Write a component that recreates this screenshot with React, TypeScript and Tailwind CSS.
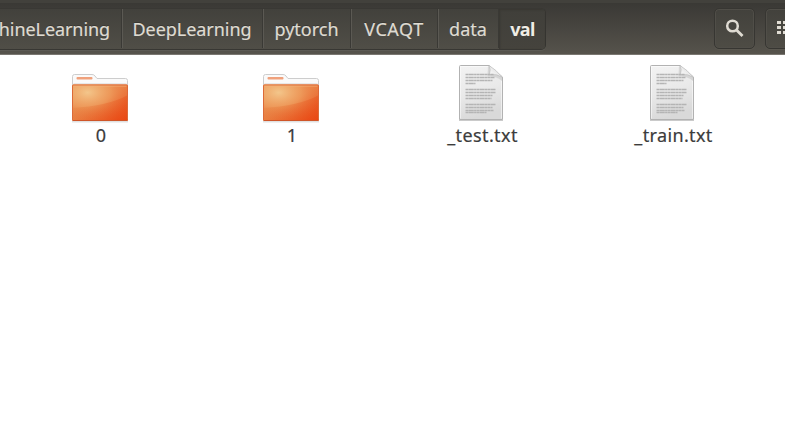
import React from "react";

function Crumb({ label, box, text }: { label: string; box: string; text: string }) {
  return (
    <div className={`flex h-full shrink-0 items-center justify-center border-r border-[#3a3935] ${box}`}>
      <span className={`whitespace-nowrap leading-6 ${text}`}>{label}</span>
    </div>
  );
}

function FolderIcon({ id }: { id: string }) {
  return (
    <svg width="60" height="52" viewBox="0 0 60 52" className="block">
      <defs>
        <linearGradient id={`${id}-base`} x1="0" y1="0" x2="1" y2="1">
          <stop offset="0" stopColor="#eda262" />
          <stop offset="0.5" stopColor="#ea8246" />
          <stop offset="1" stopColor="#ea4b16" />
        </linearGradient>
        <radialGradient id={`${id}-glow`} cx="0.28" cy="0.22" r="0.8">
          <stop offset="0" stopColor="#f3c68b" />
          <stop offset="0.5" stopColor="#efa363" stopOpacity="0.65" />
          <stop offset="1" stopColor="#ea6630" stopOpacity="0" />
        </radialGradient>
        <linearGradient id={`${id}-low`} x1="0" y1="0" x2="1" y2="0.3">
          <stop offset="0" stopColor="#e39048" stopOpacity="0.3" />
          <stop offset="1" stopColor="#e83a08" stopOpacity="0.3" />
        </linearGradient>
      </defs>
      <path d="M2 48h56v2.5H2z" fill="#999" opacity=".3" />
      <path d="M2.5 15V4.5Q2.5 2.5 4.5 2.5H22Q24 2.5 25 4L27 6.5H55.5Q57.5 6.5 57.5 8.5V15z" fill="#fafafa" stroke="#cdcdcd" />
      <rect x="6.5" y="5" width="16" height="2.6" rx="1" fill="#f0a17c" />
      <path d="M3.5 11.8h53" stroke="#dedede" />
      <rect x="2" y="12.5" width="56" height="36.5" rx="1.5" fill={`url(#${id}-base)`} />
      <rect x="2" y="12.5" width="56" height="36.5" rx="1.5" fill={`url(#${id}-glow)`} />
      <path d="M2 36Q38 34 58 23V47.5Q58 49 56.5 49H3.5Q2 49 2 47.5z" fill={`url(#${id}-low)`} />
      <rect x="2.5" y="13" width="55" height="35.5" rx="1" fill="none" stroke="#dc6a38" />
      <path d="M3.5 14.2h53" stroke="#f2b27a" opacity=".6" />
      <path d="M3 48.5h54" stroke="#cf5528" />
    </svg>
  );
}

const lines = [
  [10.5, 28], [13.5, 29], [16.5, 27], [19.5, 10],
  [25.5, 30], [28.5, 30], [31.5, 27], [34.5, 26],
  [40.5, 30], [43.5, 27], [46.5, 28], [48.5, 21],
];

function DocumentIcon({ id }: { id: string }) {
  return (
    <svg width="46" height="58" viewBox="0 0 46 58" className="block">
      <defs>
        <linearGradient id={`${id}-page`} x1="0" y1="0" x2=".25" y2="1">
          <stop offset="0" stopColor="#f3f3f3" />
          <stop offset=".55" stopColor="#e9e9e9" />
          <stop offset="1" stopColor="#d9d9d9" />
        </linearGradient>
        <linearGradient id={`${id}-fold`} x1="0" y1="1" x2="1" y2="0">
          <stop offset="0" stopColor="#fff" />
          <stop offset="1" stopColor="#d5d5d5" />
        </linearGradient>
      </defs>
      <path d="M1 56.2h44" stroke="#b3b3b3" />
      <path d="M2.5 1.5H31L44.5 13V55.5H1.5V2.5Q1.5 1.5 2.5 1.5z" fill={`url(#${id}-page)`} stroke="#b2b2b2" />
      <path d="M2.5 54.5V2.5H30M43.5 16V54.5" fill="none" stroke="#fff" opacity=".5" />
      <path d="M30 2L29.5 12.5Q37 11.5 44 17V13z" fill="#c9c9c9" opacity=".65" />
      <path d="M31 1.5Q33 5 31.5 10.5Q39 9.5 44.5 13.5Q38 5.5 31 1.5z" fill={`url(#${id}-fold)`} stroke="#bbb" strokeWidth=".6" />
      {lines.map(([y, w]) => (
        <path key={y} d={`M7.5 ${y}h${w}`} stroke="#b4b4b4" strokeWidth="1.3" strokeDasharray="3 .3 5 .3 2 .3" />
      ))}
    </svg>
  );
}

function Item({ icon, label, art, text }: { icon: React.ReactNode; label: string; art: string; text: string }) {
  return (
    <div className="flex w-[191px] shrink-0 flex-col items-center">
      <div className={`flex h-[60px] items-end justify-center ${art}`}>{icon}</div>
      <span className={`whitespace-nowrap text-[18px] leading-[23px] text-[#3c3c3c] [-webkit-text-stroke:0.2px_#3c3c3c] ${text}`}>{label}</span>
    </div>
  );
}

export default function App() {
  return (
    <div className="h-[441px] w-[785px] overflow-hidden bg-white font-['Noto_Sans','Open_Sans',sans-serif]">
      <header className="flex h-[55px] items-start overflow-hidden border-t-[3px] border-b border-t-[#42413c] border-b-[#7a7771] bg-linear-to-b from-[#3a3935] to-[#56534c] pt-[5px] text-[18px] text-[#dfdbd2] [text-shadow:0_-1px_0_#383732]">
        <nav className="flex h-[42px] w-[546px] shrink-0 overflow-hidden rounded-r-[5px] border-t border-r border-b border-t-[#393834] border-r-[#353430] border-b-[#383733] bg-linear-to-b from-[#42413c] to-[#504e47] pb-px shadow-[0_1px_0_#5c5a54]">
          <Crumb label="hineLearning" box="w-[122px] justify-end pr-[11px]" text="tracking-[-0.08px] [-webkit-text-stroke:0.2px_#dfdbd2]" />
          <Crumb label="DeepLearning" box="w-[141px] shadow-[inset_1px_0_0_#5b5953]" text="tracking-[-0.05px] [-webkit-text-stroke:0.2px_#dfdbd2]" />
          <Crumb label="pytorch" box="w-[88px] shadow-[inset_1px_0_0_#5b5953]" text="[-webkit-text-stroke:0.2px_#dfdbd2]" />
          <Crumb label="VCAQT" box="w-[87px] shadow-[inset_1px_0_0_#5b5953]" text="tracking-[0.6px] [-webkit-text-stroke:0.2px_#dfdbd2]" />
          <Crumb label="data" box="w-[61px] shadow-[inset_1px_0_0_#5b5953]" text="tracking-[0.05px] [-webkit-text-stroke:0.2px_#dfdbd2]" />
          <div className="-mb-px flex flex-1 items-center justify-center bg-linear-to-b from-[#403f3a] to-[#45433d] pb-px pl-px font-bold text-[#f0ede5] shadow-[inset_1px_1px_2px_#383732]">
            <span className="leading-6 tracking-[-0.6px]">val</span>
          </div>
        </nav>
        <button className="ml-[168px] flex h-[41px] w-[41px] shrink-0 items-center justify-center rounded-[5px] border border-[#373632] bg-linear-to-b from-[#42413c] to-[#4e4c45] shadow-[inset_0_0_0_1px_#504e48,0_1px_0_#5a574f]">
          <svg width="20" height="20" viewBox="0 0 20 20" fill="none" stroke="#dfdbd2">
            <circle cx="7.5" cy="7" r="5.3" strokeWidth="2.5" />
            <path d="M11.5 11L17.5 17" strokeWidth="2.8" />
          </svg>
        </button>
        <button className="ml-[10px] flex h-[41px] w-[41px] shrink-0 items-center rounded-[5px] border border-[#373632] bg-linear-to-b from-[#42413c] to-[#4e4c45] pb-px pl-[11px] shadow-[inset_0_0_0_1px_#504e48,0_1px_0_#5a574f]">
          <svg width="17" height="14" viewBox="0 0 17 14" fill="#dfdbd2">
            <path d="M0 0h4v3H0zM6 0h4v3H6zM12 0h4v3h-4zM0 5h4v3H0zM6 5h4v3H6zM12 5h4v3h-4zM0 10h4v3H0zM6 10h4v3H6zM12 10h4v3h-4z" />
          </svg>
        </button>
      </header>
      <main className="flex pt-[9px] pl-[5px]">
        <Item icon={<FolderIcon id="zero" />} label="0" art="pr-[2px]" text="pl-px" />
        <Item icon={<FolderIcon id="one" />} label="1" art="pr-[2px]" text="pl-px" />
        <Item icon={<DocumentIcon id="test" />} label="_test.txt" art="pb-[2px] pr-[4px]" text="tracking-[0.38px]" />
        <Item icon={<DocumentIcon id="train" />} label="_train.txt" art="pb-[2px] pr-[4px]" text="tracking-[0.35px]" />
      </main>
    </div>
  );
}
